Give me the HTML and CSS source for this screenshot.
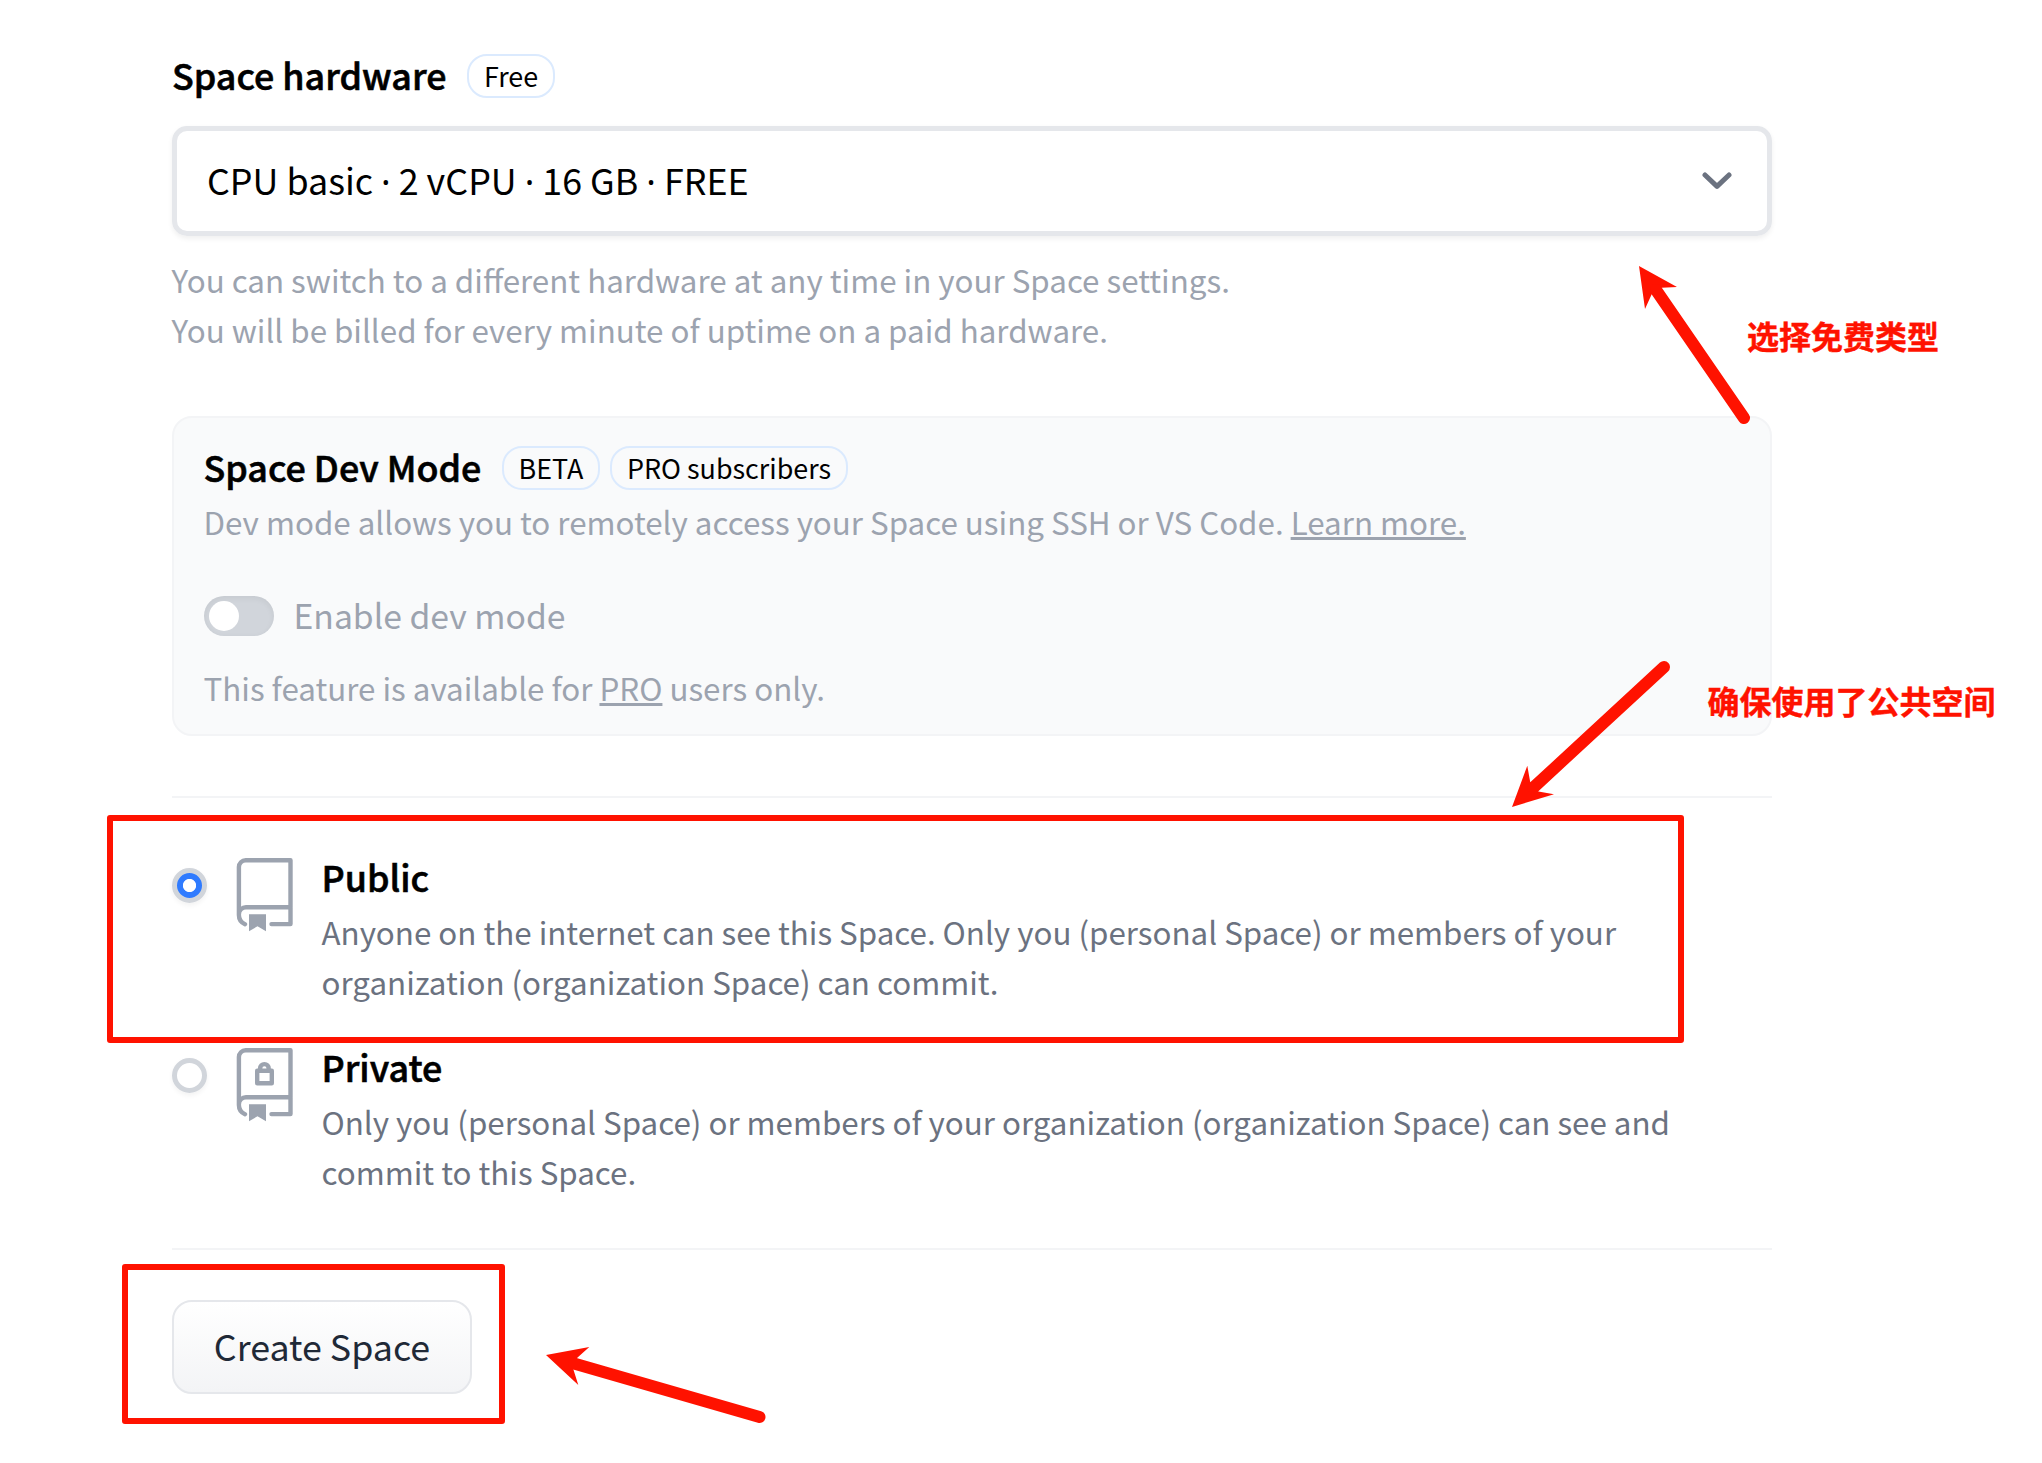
FILE: index.html
```html
<!DOCTYPE html>
<html lang="en">
<head>
<meta charset="utf-8">
<title>Create Space</title>
<link rel="stylesheet" href="styles.css">
</head>
<body>
<main class="page">
  <div class="heading-row">
    <h2 class="heading">Space hardware</h2>
    <span class="badge badge-free">Free</span>
  </div>
  <div class="select">
    <span class="select-value">CPU basic <span class="dot">·</span> 2 vCPU <span class="dot">·</span> 16 GB <span class="dot">·</span> FREE</span>
    <svg class="chevron" width="30" height="18" viewBox="0 0 30 18"><path d="M3 3 15 14.4 27 3"/></svg>
  </div>
  <p class="help">You can switch to a different hardware at any time in your Space settings.<br>You will be billed for every minute of uptime on a paid hardware.</p>

  <section class="card">
    <div class="heading-row">
      <h2 class="heading">Space Dev Mode</h2>
      <span class="badge badge-beta">BETA</span>
      <span class="badge badge-pro">PRO subscribers</span>
    </div>
    <p class="note">Dev mode allows you to remotely access your Space using SSH or VS Code. <a class="link">Learn more.</a></p>
    <div class="toggle-row">
      <span class="toggle"><span class="knob"></span></span>
      <span class="toggle-label">Enable dev mode</span>
    </div>
    <p class="note note-pro">This feature is available for <a class="link">PRO</a> users only.</p>
  </section>

  <hr class="divider">

  <div class="options">
    <div class="option">
      <span class="radio radio-on"></span>
      <svg class="book" width="58" height="75" viewBox="0 0 58 75">
        <path class="line" d="M9 66.2C5 64.5 2.9 61 2.9 57V9A6.8 6.8 0 0 1 9.7 2.2H54.5V66.1H35.5M54.5 49.2H10A7.1 7.1 0 0 0 2.9 56.3"/>
        <path class="solid" d="M13 56.3H30V73.3L21.5 68.3 13 73.3Z"/>
      </svg>
      <div class="option-text">
        <h3 class="heading">Public</h3>
        <p class="desc">Anyone on the internet can see this Space. Only you (personal Space) or members of your<br>organization (organization Space) can commit.</p>
      </div>
    </div>
    <div class="option">
      <span class="radio"></span>
      <svg class="book" width="58" height="75" viewBox="0 0 58 75">
        <path class="line" d="M9 66.2C5 64.5 2.9 61 2.9 57V9A6.8 6.8 0 0 1 9.7 2.2H54.5V66.1H35.5M54.5 49.2H10A7.1 7.1 0 0 0 2.9 56.3"/>
        <path class="solid" d="M13 56.3H30V73.3L21.5 68.3 13 73.3Z"/>
        <path class="line" d="M21.2 22.8H35.8V35.2H21.2ZM24.1 21.5V20.4A4.3 4.3 0 0 1 32.7 20.4V21.5"/>
      </svg>
      <div class="option-text">
        <h3 class="heading">Private</h3>
        <p class="desc">Only you (personal Space) or members of your organization (organization Space) can see and<br>commit to this Space.</p>
      </div>
    </div>
  </div>

  <hr class="divider divider-end">
  <button class="create">Create Space</button>
</main>

<!-- annotations over the form -->
<div class="mark mark-public"></div>
<div class="mark mark-create"></div>
<svg class="arrows" width="2042" height="1463" viewBox="0 0 2042 1463">
  <path class="head" d="M1639 266 1677 287 1661.7 287.7 1651.7 294.3 1645 309Z"/>
  <path class="shaft" d="M1656 290 1744 418"/>
  <path class="head" d="M1512 807 1527.3 765.7 1530.2 782 1538.4 791.5 1554 794.3Z"/>
  <path class="shaft" d="M1533.5 787.5 1664 667"/>
  <path class="head" d="M546 1355 589.3 1347 577 1358 573.4 1369.5 578.3 1385Z"/>
  <path class="shaft" d="M574 1363.5 759.5 1417"/>
</svg>
<span class="remark remark-free">选择免费类型</span>
<span class="remark remark-public">确保使用了公共空间</span>
</body>
</html>
```

FILE: styles.css
```css
* { box-sizing: border-box; }
body {
  margin: 0;
  position: relative;
  width: 2042px;
  height: 1463px;
  overflow: hidden;
  background: #fff;
  color: #000;
  font-family: "Noto Sans CJK SC", "Noto Sans", sans-serif;
  font-size: 31.34px;
  line-height: 50px;
  white-space: nowrap;
}
h2, h3, p { margin: 0; }
.page { width: 1600px; margin-left: 172px; padding-top: 44px; }

.heading-row { display: flex; align-items: center; height: 60px; }
.heading {
  font-size: 35.85px;
  line-height: 60px;
  font-weight: 500;
  -webkit-text-stroke: .6px currentColor;
}
.badge {
  height: 44px;
  margin: 4px 0 0;
  border: 2px solid #dbeafe;
  border-radius: 20px;
  font-size: 26.9px;
  line-height: 40px;
  text-align: center;
}
.badge-free { width: 88px; margin-left: auto; margin-right: 1217px; }
.badge-beta { width: 98px; margin-left: auto; }
.badge-pro { width: 238px; margin-left: 10px; margin-right: 892.5px; }

.select {
  display: flex;
  align-items: center;
  justify-content: space-between;
  height: 110px;
  margin-top: 22px;
  padding: 0 35px 0 30px;
  border: 5px solid #e5e7eb;
  border-radius: 15px;
  box-shadow: 0 2.5px 5px rgba(0, 0, 0, .06);
  font-size: 35.85px;
}
.select-value { padding-bottom: 5px; }
.dot { font-family: "Noto Sans", sans-serif; line-height: 0; }
.chevron { fill: none; stroke: #6b7280; stroke-width: 5; stroke-linecap: round; stroke-linejoin: round; }
.help { margin: 19px 0 0 -.5px; color: #9ca3af; }

.card {
  height: 320px;
  margin-top: 61px;
  padding: 18px 29.5px;
  border: 2px solid #f3f4f6;
  border-radius: 20px;
  background: #f9fafb;
  color: #9ca3af;
}
.card .heading, .card .badge { color: #000; }
.note { padding-top: 1px; }
.link { text-decoration: underline; text-decoration-thickness: 3px; text-underline-offset: 2px; text-decoration-skip-ink: none; }
.toggle-row { display: flex; align-items: center; gap: 20px; height: 60px; margin-top: 39px; }
.toggle {
  width: 70px;
  height: 40px;
  padding: 5px;
  border-radius: 20px;
  background: #d1d5db;
  box-shadow: inset 0 2px 6px rgba(0, 0, 0, .06);
}
.knob { display: block; width: 30px; height: 30px; border-radius: 50%; background: #fff; }
.toggle-label { font-size: 33.7px; padding-bottom: 3px; }
.note-pro { margin-top: 16px; }

.divider { height: 2px; margin: 60px 0 0; border: 0; background: #f3f4f6; }
.divider-end { margin-top: 52px; }

.options { display: flex; flex-direction: column; gap: 30px; margin-top: 48px; }
.option { display: flex; align-items: flex-start; height: 160px; }
.radio {
  width: 35px;
  height: 35px;
  margin-top: 22px;
  border: 5px solid #d1d5db;
  border-radius: 50%;
  box-shadow: 0 2.5px 5px rgba(0, 0, 0, .05);
}
.radio-on { background: radial-gradient(circle, #fff 6.2px, #2f7bff 7px); background-origin: border-box; }
.book { margin: 12px 0 0 29px; }
.book .line { fill: none; stroke: #9ca3af; stroke-width: 4.4; stroke-linecap: round; stroke-linejoin: round; }
.book .solid { fill: #9ca3af; }
.option-text { margin-left: 27.5px; }
.desc { padding-top: 1px; color: #6b7280; }

.create {
  display: block;
  width: 300px;
  height: 94px;
  margin-top: 50px;
  padding: 0 0 4px;
  border: 2px solid #e5e7eb;
  border-radius: 20px;
  background: linear-gradient(#fff, #f3f4f6);
  color: #1f2937;
  font: 35.8px/50px "Noto Sans CJK SC", sans-serif;
}

.mark { position: absolute; border: 6px solid #ff1200; border-radius: 3px; }
.mark-public { left: 107px; top: 815px; width: 1577px; height: 228px; }
.mark-create { left: 122px; top: 1264px; width: 383px; height: 160px; }
.arrows { position: absolute; left: 0; top: 0; }
.arrows .head { fill: #ff1200; }
.arrows .shaft { fill: none; stroke: #ff1200; stroke-width: 12; stroke-linecap: round; }
.remark {
  position: absolute;
  color: #ff1200;
  font-size: 32px;
  line-height: 40px;
  font-weight: 700;
  -webkit-text-stroke: .4px currentColor;
}
.remark-free { left: 1747px; top: 315px; }
.remark-public { left: 1707.5px; top: 680px; }
```
